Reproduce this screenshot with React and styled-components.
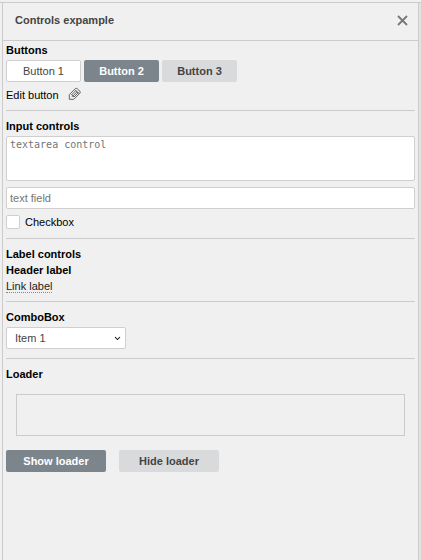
import React from "react";
import styled, { createGlobalStyle } from "styled-components";

const GlobalStyle = createGlobalStyle`
  *, *::before, *::after { box-sizing: border-box; }
  body {
    margin: 0;
    background: #f0f0f0;
    color: #000;
    font: 11px/16px "Liberation Sans", Arial, sans-serif;
    overflow: hidden;
  }
`;

const Page = styled.div`
  height: 560px;
  padding-top: 2px;
  display: flex;
`;

const Frame = styled.div`
  flex: 1;
  display: flex;
  padding-left: 2px;
  border-top: 1px solid #cbcbcb;
  background: linear-gradient(to right, #f0f0f0 418px, #e2e2e2 418px);
`;

const Panel = styled.aside`
  width: 417px;
  border: solid #cbcbcb;
  border-width: 0 1px;
  background: #f0f0f0;
`;

const Header = styled.header`
  height: 38px;
  padding: 0 10px 3px 12px;
  display: flex;
  align-items: center;
  justify-content: space-between;
  border-bottom: 1px solid #cbcbcb;
  color: #444;
  font-weight: bold;
`;

const CloseButton = styled.button`
  display: flex;
  width: 11px;
  height: 11px;
  padding: 0;
  border: 0;
  background: none;
`;

const Section = styled.section`
  height: ${(p) => p.$height}px;
  margin: 0 3px;
  padding-top: ${(p) => p.$top}px;
  border-bottom: ${(p) => (p.$last ? "0" : "1px solid #cbcbcb")};
`;

const Title = styled.div`
  height: ${(p) => p.$height || 16}px;
  font-weight: bold;
`;

const ButtonRow = styled.div`
  display: flex;
  gap: ${(p) => p.$gap}px;
`;

const variants = {
  plain: "background:#fff;border-color:#cfcfcf;color:#444;font-weight:normal;",
  primary: "background:#7d858c;color:#fff;",
  muted: "background:#d8dadc;color:#444;",
};

const Button = styled.button`
  width: ${(p) => p.$width}px;
  height: 22px;
  padding: 0;
  border: 1px solid transparent;
  border-radius: 2px;
  font: bold 11px/20px "Liberation Sans", Arial, sans-serif;
  ${(p) => variants[p.$variant]}
`;

const EditRow = styled.div`
  display: flex;
  height: 16px;
  margin-top: 5px;
  gap: 9px;
`;

const TextArea = styled.textarea`
  display: block;
  width: 409px;
  height: 45px;
  padding: 1px 3px;
  border: 1px solid #cfcfcf;
  border-radius: 2px;
  resize: none;
  font: 10px/13px "DejaVu Sans Mono", monospace;
  &::placeholder { color: #757575; opacity: 1; }
`;

const TextField = styled.input`
  display: block;
  width: 409px;
  height: 22px;
  margin-top: 6px;
  padding: 0 3px;
  border: 1px solid #cfcfcf;
  border-radius: 2px;
  font: 11px "Liberation Sans", Arial, sans-serif;
  &::placeholder { color: #757575; opacity: 1; }
`;

const CheckLabel = styled.label`
  display: flex;
  margin-top: 5px;
  height: 16px;
  align-items: center;
  gap: 5px;
`;

const CheckInput = styled.input`
  appearance: none;
  width: 14px;
  height: 14px;
  margin: 0;
  border: 1px solid #cfcfcf;
  border-radius: 2px;
  background: #fff;
`;

const LinkLabel = styled.a`
  display: inline-block;
  height: 15px;
  border-bottom: 1px dotted #888;
  color: #222;
`;

const Combo = styled.div`
  display: flex;
  align-items: center;
  justify-content: space-between;
  width: 120px;
  height: 22px;
  padding: 0 4px 0 8px;
  border: 1px solid #cfcfcf;
  border-radius: 2px;
  background: #fff;
  color: #444;
`;

const LoaderBox = styled.div`
  height: 42px;
  margin: 12px 10px 14px;
  border: 1px solid #cbcbcb;
`;

const Close = () => (
  <svg width="11" height="11" viewBox="0 0 11 11" stroke="#777" strokeWidth="1.8">
    <path d="M1 1 10 10M10 1 1 10" />
  </svg>
);

const Pencil = () => (
  <svg width="14" height="14" viewBox="0 0 14 14" fill="none" stroke="#555" strokeWidth="0.9">
    <path d="M1.3 12.3V7.6L7.2 1.7Q8.2.9 9.2 1.7L12 4.3Q12.7 5.2 12 6.1L5.8 12.3Z" />
    <path d="M4 9.8 9.3 4.5M3.6 7.8 8.2 3.2M6 10 10.7 5.3M7.4 3.2 10.7 6.5M3.6 7.8Q5 8.3 6 10" />
  </svg>
);

const Chevron = () => (
  <svg width="7" height="5" viewBox="0 0 7 5" fill="none" stroke="#111" strokeWidth="1.05">
    <path d="M1 1 3.5 3.5 6 1" />
  </svg>
);

export default function App() {
  return (
    <>
      <GlobalStyle />
      <Page>
        <Frame>
          <Panel>
            <Header>
              Controls expample
              <CloseButton aria-label="Close"><Close /></CloseButton>
            </Header>
            <Section $height={70} $top={1}>
              <Title $height={18}>Buttons</Title>
              <ButtonRow $gap={3}>
                <Button $width={75} $variant="plain">Button 1</Button>
                <Button $width={75} $variant="primary">Button 2</Button>
                <Button $width={75} $variant="muted">Button 3</Button>
              </ButtonRow>
              <EditRow>Edit button <Pencil /></EditRow>
            </Section>
            <Section $height={128} $top={7}>
              <Title $height={18}>Input controls</Title>
              <TextArea placeholder="textarea control" />
              <TextField placeholder="text field" />
              <CheckLabel><CheckInput type="checkbox" />Checkbox</CheckLabel>
            </Section>
            <Section $height={63} $top={7}>
              <Title>Label controls</Title>
              <Title>Header label</Title>
              <LinkLabel>Link label</LinkLabel>
            </Section>
            <Section $height={57} $top={7}>
              <Title $height={18}>ComboBox</Title>
              <Combo>Item 1<Chevron /></Combo>
            </Section>
            <Section $height={200} $top={7} $last>
              <Title>Loader</Title>
              <LoaderBox />
              <ButtonRow $gap={13}>
                <Button $width={100} $variant="primary">Show loader</Button>
                <Button $width={100} $variant="muted">Hide loader</Button>
              </ButtonRow>
            </Section>
          </Panel>
        </Frame>
      </Page>
    </>
  );
}
